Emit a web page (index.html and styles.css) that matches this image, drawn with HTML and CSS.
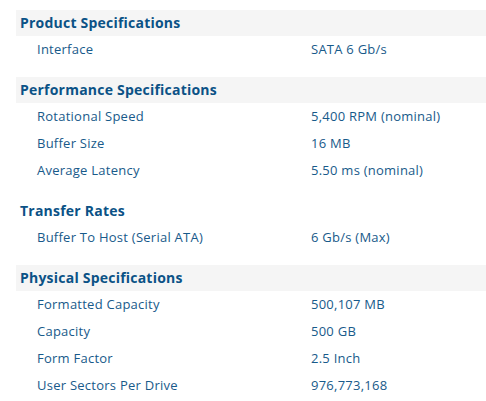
FILE: index.html
```html
<!DOCTYPE html>
<html>
<head>
<meta charset="utf-8">
<link rel="stylesheet" href="styles.css">
</head>
<body>
<div class="specs">
  <section class="group">
    <h3 class="group-title shaded">Product Specifications</h3>
    <div class="row"><span class="label">Interface</span><span class="value">SATA 6 Gb/s</span></div>
  </section>
  <section class="group">
    <h3 class="group-title shaded">Performance Specifications</h3>
    <div class="row"><span class="label">Rotational Speed</span><span class="value">5,400 RPM (nominal)</span></div>
    <div class="row"><span class="label">Buffer Size</span><span class="value">16 MB</span></div>
    <div class="row"><span class="label">Average Latency</span><span class="value">5.50 ms (nominal)</span></div>
  </section>
  <section class="group">
    <h3 class="group-title">Transfer Rates</h3>
    <div class="row"><span class="label">Buffer To Host (Serial ATA)</span><span class="value">6 Gb/s (Max)</span></div>
  </section>
  <section class="group">
    <h3 class="group-title shaded">Physical Specifications</h3>
    <div class="row"><span class="label">Formatted Capacity</span><span class="value">500,107 MB</span></div>
    <div class="row"><span class="label">Capacity</span><span class="value">500 GB</span></div>
    <div class="row"><span class="label">Form Factor</span><span class="value">2.5 Inch</span></div>
    <div class="row"><span class="label">User Sectors Per Drive</span><span class="value">976,773,168</span></div>
  </section>
</div>
</body>
</html>
```
FILE: styles.css
```css
html, body {
  margin: 0;
  padding: 0;
  background: #ffffff;
}
body {
  font-family: "Open Sans", "DejaVu Sans", sans-serif;
  color: #185a8a;
}
.specs {
  padding: 10px 0 0 16px;
  display: flex;
  flex-direction: column;
  gap: 14px;
}
.group {
  display: flex;
  flex-direction: column;
}
.group-title {
  margin: 0;
  height: 26px;
  line-height: 26px;
  padding-left: 4px;
  font-size: 14px;
  font-weight: 700;
  letter-spacing: 0.22px;
  color: #0b5286;
}
.group-title.shaded {
  background: #f5f5f5;
}
.row {
  display: grid;
  grid-template-columns: 295px 1fr;
  height: 27px;
  line-height: 27px;
  font-size: 13px;
  letter-spacing: 0.25px;
}
.label {
  padding-left: 21px;
}
```
